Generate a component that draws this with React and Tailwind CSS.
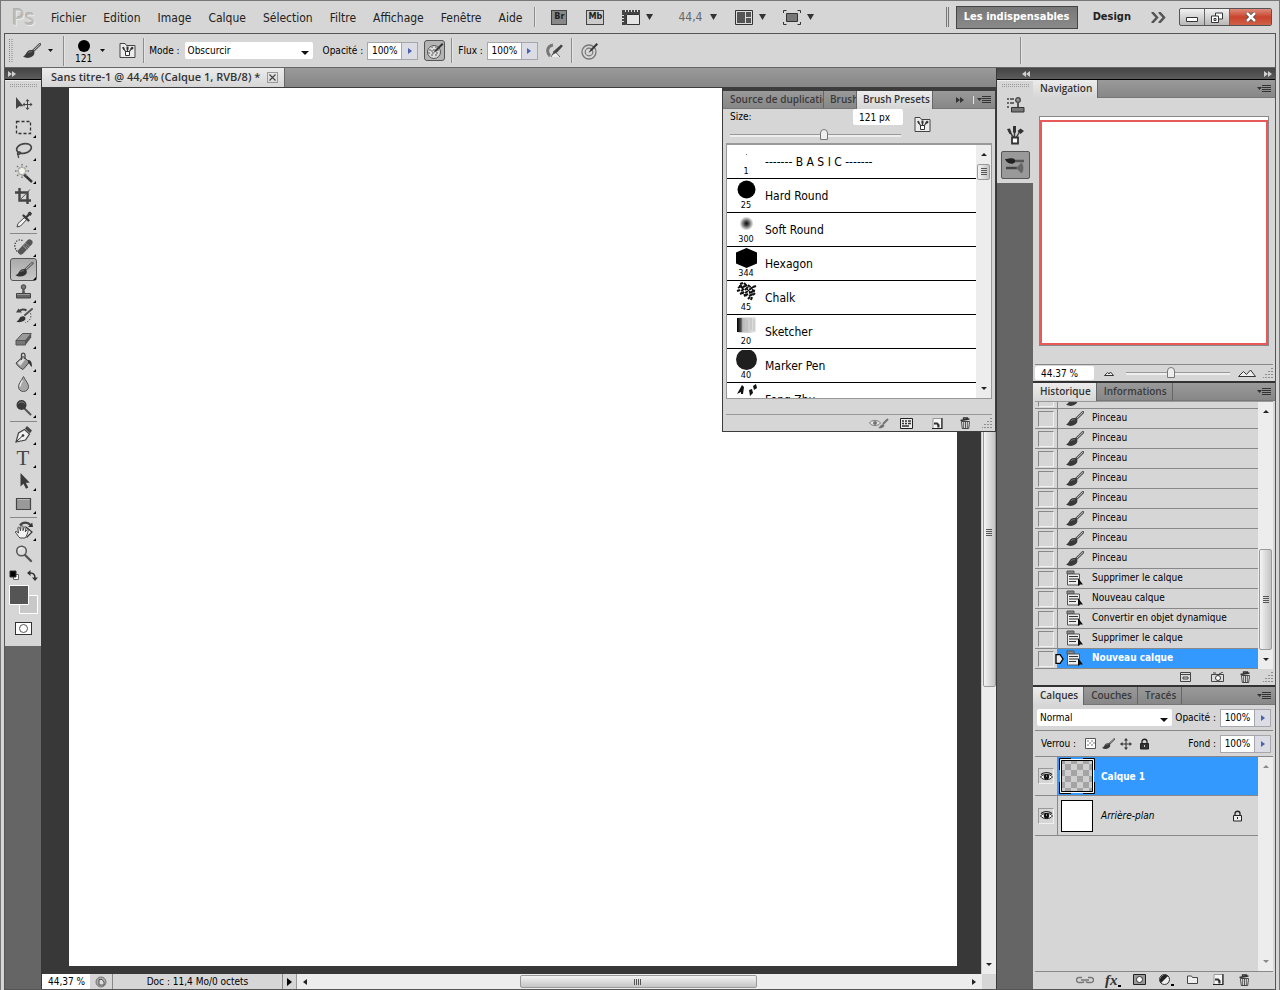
import React from "react";

const UI = "font-['DejaVu_Sans_Condensed','Noto_Sans',sans-serif]";
const TAB = "font-['Open_Sans','Noto_Sans',sans-serif]";

/* ---------- icons ---------- */

const Svg = ({ w = 20, h = 20, className = "", children }) => (
  <svg width={w} height={h} viewBox={`0 0 ${w} ${h}`} className={`block shrink-0 ${className}`} fill="none" aria-hidden="true">
    {children}
  </svg>
);

const Down = ({ className = "", w = 7, h = 4, fill = "#111" }) => (
  <Svg w={w} h={h} className={className}><path d={`M0 0h${w}L${w / 2} ${h}Z`} fill={fill} /></Svg>
);

const BrushIcon = ({ w = 18, h = 16 }) => (
  <svg width={w} height={h} viewBox="0 0 18 16" className="block shrink-0" fill="none" aria-hidden="true">
    <path d="M10 8 17 1.2" stroke="#555" strokeWidth="2.6" strokeLinecap="round" />
    <path d="M11 7 17 1.2" stroke="#bbb" strokeWidth="1" />
    <path d="M0 13.200C2.600 13 3 9.600 5.200 7.800c1.900-1.400 4.600-1 5.700.5 1.200 1.700.3 4-1.800 5.300C6.400 15.400 2.500 15.400 0 13.200Z" fill="#3a3a3a" />
    <path d="M5 10c1-1.200 2.400-1.600 3.800-1.200" stroke="#888" strokeWidth=".8" />
  </svg>
);

const PresetFolder = () => (
  <Svg w={17} h={17}>
    <path d="M1 15.500V1.500h5l1.500 2h8.500v12Z" fill="#ececec" stroke="#444" />
    <path d="M4.500 6.500 7 10M8.500 5v5M12.500 6.500 10 10" stroke="#333" strokeWidth="1.200" />
    <path d="M3 5.500l2-.8.8 2.800-1.500.3ZM7.500 4.500h2v3h-2ZM11.200 6.500l1.800-2L14.800 6l-2 2Z" fill="#333" />
    <path d="M6.500 9.500h4v4h-4Z" fill="#fff" stroke="#333" />
  </Svg>
);

const Flyout = () => (
  <button aria-label="Menu du panneau" className="px-1">
    <Svg w={14} h={8}>
      <path d="M0 2h5L2.500 5Z" fill="#333" />
      <path d="M5 .5h9M5 2.500h9M5 4.500h9M5 6.500h9" stroke="#333" />
    </Svg>
  </button>
);

const Chevrons = ({ left, fill = "#d0d0d0" }) => (
  <Svg w={8} h={6}>
    <path d={left ? "M4 0v6L0 3ZM8 0v6L4 3Z" : "M0 0v6l4-3ZM4 0v6l4-3Z"} fill={fill} />
  </Svg>
);

const Trash = () => (
  <Svg w={11} h={12}>
    <path d="M.5 3.500 9.500 2M3.500 2.500V1h4v1" stroke="#333" strokeWidth="1.300" />
    <path d="M1.500 4.500h8l-.8 7H2.300Z" fill="#eee" stroke="#444" />
    <path d="M3.700 5v6M5.500 5v6M7.300 5v6" stroke="#444" strokeWidth=".9" />
  </Svg>
);

const NewDoc = () => (
  <Svg w={11} h={11}>
    <path d="M1 .5h8.500v10H1Z" fill="#f5f5f5" stroke="#999" />
    <path d="M10 0v10.500H0" stroke="#222" strokeWidth="1.200" />
    <path d="M2 4.500h3.500l2 2V9.500H5.500L5 6.500H2Z" fill="#333" />
  </Svg>
);

const Grip = () => (
  <Svg w={10} h={10}>
    <path d="M9 0v1M9 3v1M6 3v1M9 6v1M6 6v1M3 6v1M9 9v1M6 9v1M3 9v1M0 9v1" stroke="#777" strokeWidth="1.500" />
  </Svg>
);

const Eye = () => (
  <span className="flex size-4 items-center justify-center border border-[#f0f0f0] border-t-[#999] border-l-[#999]">
    <Svg w={13} h={11}>
      <path d="M.5 6C2.500 2.800 10 2.300 12.500 6 10 9.500 3 9.500.5 6Z" fill="#fff" stroke="#222" />
      <circle cx="6.500" cy="5.700" r="2.700" fill="#111" />
      <path d="M1 3.500C4 .8 9 .8 12 3.500" stroke="#222" strokeWidth="1.200" />
      <path d="M6 5h1" stroke="#fff" />
    </Svg>
  </span>
);

const Lock = ({ dark }) => (
  <Svg w={11} h={12}>
    <path d="M3 5.500V3.500c0-3 5-3 5 0v2" stroke="#222" strokeWidth="1.300" />
    <path d="M1.500 5.500h8v5.500h-8Z" fill={dark ? "#333" : "#eee"} stroke="#222" />
    <path d="M5.500 7v2" stroke={dark ? "#ccc" : "#222"} />
  </Svg>
);

const Move4 = () => (
  <Svg w={12} h={12}>
    <path d="M6 1v10M1 6h10" stroke="#333" />
    <path d="M6 0 4 2.500h4ZM6 12 4 9.500h4ZM0 6l2.500-2v4ZM12 6 9.500 4v4Z" fill="#333" />
  </Svg>
);

const SelectedThumb = () => (
  <Svg w={36} h={36}>
    <defs>
      <pattern id="checker" width="12" height="12" patternUnits="userSpaceOnUse">
        <path d="M0 0h12v12H0Z" fill="#cfcfcf" />
        <path d="M0 0h6v6H0ZM6 6h6v6H6Z" fill="#a4a4a4" />
      </pattern>
    </defs>
    <path d="M.5 12V.5H12M24 .5h11.500V12M35.500 24v11.500H24M12 35.500H.5V24" stroke="#000" />
    <path d="M1.500 1.500h33v33h-33Z" stroke="#fff" />
    <path d="M2.500 2.500h31v31h-31Z" fill="url(#checker)" stroke="#000" />
  </Svg>
);

const toolIcons = {
  move: <><path d="M2 2v12l3.200-2.800h4.300Z" fill="#444" /><path d="M13.500 5.500v8M9.500 9.500h8" stroke="#444" /><path d="m13.500 4-2 2.200h4ZM13.500 15l-2-2.200h4ZM8.500 9.500l2.200-2v4ZM18.500 9.500l-2.200-2v4Z" fill="#444" /></>,
  marquee: <path d="M2.500 3.500h14v12h-14Z" stroke="#333" strokeWidth="1.300" strokeDasharray="3 2" />,
  lasso: <><ellipse cx="10" cy="7.500" rx="7.500" ry="4.800" transform="rotate(-12 10 7.500)" stroke="#444" strokeWidth="1.700" /><path d="M4 11c-1 2 1.500 3 2.500 1.500S4 10 3.500 12s1.500 2.500 1 5" stroke="#444" strokeWidth="1.300" /></>,
  wand: <><path d="M10 10.500 18 18" stroke="#333" strokeWidth="2.400" /><path d="M8 0v14M1 7h14M3 2l10 10M13 2 3 12" stroke="#777" strokeWidth="1.400" strokeDasharray="1.500 1" /><circle cx="8" cy="7" r="3.600" fill="#f2f2e8" stroke="#aaa" /></>,
  crop: <><path d="M1 5.500h12.500V17M5.500 1v12.500H17" stroke="#444" strokeWidth="2.400" /><path d="M5.500 13.500 16 2.500" stroke="#555" /></>,
  dropper: <><path d="m3 17 1-3.500L11 7l2.200 2L6.500 16Z" fill="#f4f4f4" stroke="#444" /><path d="m9.500 5.500 5 5M11.500 8 16 3.500" stroke="#3a3a3a" strokeWidth="2.400" strokeLinecap="round" /><path d="m13.500 3 2.500-1.500 2 2-1.500 2.500Z" fill="#3a3a3a" /></>,
  heal: <><path d="M8.500 3.500C4 1.500.5 5 .8 9s2.700 6 4.200 6.500" stroke="#333" strokeWidth="1.300" strokeDasharray="1.200 1.500" /><path d="M7 14.500 15.500 5.500" stroke="#555" strokeWidth="6" strokeLinecap="round" /><path d="m9.500 9.500 3 2.500M10.500 8l3.500 3" stroke="#bbb" strokeWidth="1" strokeDasharray="1 1" /><path d="m8.500 8 5 5M11 6l5 4" stroke="#999" strokeWidth=".8" /></>,
  brush: <><path d="m11.500 9.500 7-6.500" stroke="#555" strokeWidth="2.400" strokeLinecap="round" /><path d="m12 9 6.500-6" stroke="#ccc" strokeWidth=".9" /><path d="M1.500 15c2.800-.2 3.300-3.500 5.500-5.200 2-1.400 4.400-1 5.400.6s.3 3.700-1.700 4.900c-2.600 1.600-6.700 1.700-9.200-.3Z" fill="#333" /><path d="M6.500 12c1-1.300 2.300-1.600 3.700-1.200" stroke="#888" strokeWidth=".8" /></>,
  stamp: <><circle cx="9.500" cy="4" r="2.300" fill="#777" stroke="#444" /><path d="M8.500 6h2l.5 5H8Z" fill="#555" /><path d="M2.500 10.500h14v4.500h-14Z" fill="#666" stroke="#444" /><path d="M3 11.500h13" stroke="#999" /></>,
  history: <><path d="m11 9 7-6" stroke="#555" strokeWidth="2" strokeLinecap="round" /><path d="M2 15.500c2.500 0 3-3.500 5-4.800 1.600-1 3.500-.6 4.200.6.700 1.400 0 3-1.600 3.800-2.200 1.300-5.600 1.500-7.600.4Z" fill="#333" /><path d="M5 5.500c2-2.500 5.500-2.500 7.500-1" stroke="#444" strokeWidth="2" /><path d="M2 6.500h6L4.500 2.500Z" fill="#444" /><path d="M16.500 7c1.500 4.500-1 9-5.500 9.500" stroke="#555" strokeDasharray="1.500 1.500" /></>,
  eraser: <><path d="M2 11.500 8.500 4.500h8.700L11.500 11.500Z" fill="#999" stroke="#555" /><path d="M2 11.500h9.500V16H2Z" fill="#777" stroke="#555" /><path d="m11.500 11.500 5.700-7v4L11.500 16Z" fill="#555" /></>,
  bucket: <><path d="m2 11 7-6.500 6.500 5.500-6.500 7.500C6 16 3.500 14 2 11Z" fill="#999" stroke="#444" /><path d="m3.500 11 5.500-5 2 1.800-4.500 6Z" fill="#ddd" /><path d="M7.500 8V3c0-2.500 3.500-2.500 3.500 0v4" stroke="#444" strokeWidth="1.300" /><path d="M14 8c3 0 4 2.500 4 7-1.500-.5-2-3-4-4.500Z" fill="#333" /></>,
  drop: <><path d="M9.500 1.500c2.500 5 5 7 5 10.200 0 3-2.300 4.800-5 4.800s-5-1.800-5-4.800c0-3.200 2.500-5.200 5-10.200Z" fill="#a8a8a8" stroke="#555" /><path d="M8.500 5.500C7 8 6 9.500 6 11.500" stroke="#eee" strokeWidth="1.300" /></>,
  dodge: <><path d="m10 10 6.500 6.500" stroke="#555" strokeWidth="2" strokeLinecap="round" /><circle cx="7.500" cy="7" r="5" fill="#3a3a3a" /><path d="M4.500 5.500c1.500-2 4.500-2 6 0" stroke="#888" /></>,
  pen: <><path d="m2 17 2.500-9 6-3.500L15.500 9 11.500 15Z" fill="#f0f0f0" stroke="#444" strokeWidth="1.200" /><path d="M2.500 16.500 9 10.500" stroke="#333" /><circle cx="9" cy="10.500" r="1.300" fill="#333" /><path d="m11 3.500 2-2.500 5 4.500-2 2.800Z" fill="#444" /></>,
  arrow: <path d="M6.500 2v13.500l3-2.800 2.500 5 2.300-1.200-2.500-4.700h4Z" fill="#3a3a3a" />,
  rect: <><path d="M2.500 4.500h14v11h-14Z" fill="#999" stroke="#444" strokeWidth="1.200" /><path d="M3.500 5.500h12" stroke="#bbb" /></>,
  hand: <><path d="M6 4.500c3-4 8-3.500 10.500-.5" stroke="#444" strokeWidth="2.200" /><path d="M14 6h5l-.8-4.500Z" fill="#333" /><path d="m12 6 6 5-5.500 5.500" fill="#f2f2f2" stroke="#333" strokeWidth="1.200" /><path d="M6 17c-2-1.500-3-4.200-4.800-6 .8-1.200 2.300-.5 3.300 1.200L3.800 7c.2-1.200 1.700-1 2 0l.7 2.800L7 5.500c.3-1.200 1.900-1 2 .1v4l1.200-3.300c.5-1 1.900-.6 1.800.5l-.7 4 1.500-1.800c.8-.7 1.800 0 1.400 1C13.500 12 13 15 11 17Z" fill="#f2f2f2" stroke="#444" /></>,
  zoom: <><path d="m11 11 6 6" stroke="#555" strokeWidth="2.400" strokeLinecap="round" /><circle cx="7.500" cy="7" r="4.800" fill="#ddd" stroke="#555" strokeWidth="1.500" /><path d="M5 6c.5-1.500 2-2 3-2" stroke="#fff" /></>,
};

const toolGroups = [
  [["move", "Déplacement"], ["marquee", "Rectangle de sélection"], ["lasso", "Lasso"], ["wand", "Sélection rapide"], ["crop", "Recadrage"], ["dropper", "Pipette"]],
  [["heal", "Correcteur"], ["brush", "Pinceau"], ["stamp", "Tampon"], ["history", "Forme d'historique"], ["eraser", "Gomme"], ["bucket", "Pot de peinture"], ["drop", "Goutte d'eau"], ["dodge", "Densité"]],
  [["pen", "Plume"], ["type", "Texte"], ["arrow", "Sélection de tracé"], ["rect", "Rectangle"]],
  [["hand", "Main"], ["zoom", "Zoom"]],
];

/* ---------- small controls ---------- */

const VLine = ({ className = "h-7" }) => <span className={`block w-px shrink-0 bg-[#8c8c8c] shadow-[1px_0_#e4e4e4] ${className}`} />;

const Percent = ({ id, label }) => (
  <div className="flex items-center gap-1">
    <label htmlFor={id}>{label}</label>
    <span className="flex h-[18px] border border-[#a6a6ac] bg-[#a6a6ac]">
      <input id={id} defaultValue="100%" className="w-[33px] bg-white text-center text-[10px] outline-none" />
      <button aria-label={`Régler ${label}`} className="ml-px flex w-[15px] items-center justify-center bg-[#dcdce4]">
        <Svg w={4} h={6}><path d="M0 0v6l4-3Z" fill="#4a62b0" /></Svg>
      </button>
    </span>
  </div>
);

const Select = ({ id, label, value, className }) => (
  <span className={`relative flex ${className}`}>
    <select id={id} aria-label={label} defaultValue={value} className="h-full w-full appearance-none rounded-xs bg-white pl-[3px] text-[10px] outline-none">
      <option>{value}</option>
    </select>
    <Down className="pointer-events-none absolute top-1/2 right-1" w={8} h={4} />
  </span>
);

const Slider = ({ label, value, className = "" }) => (
  <input
    type="range"
    aria-label={label}
    defaultValue={value}
    className={`h-3 appearance-none bg-transparent [&::-webkit-slider-runnable-track]:h-[3px] [&::-webkit-slider-runnable-track]:border-t [&::-webkit-slider-runnable-track]:border-[#999] [&::-webkit-slider-runnable-track]:bg-[#eee] [&::-webkit-slider-thumb]:-mt-[6px] [&::-webkit-slider-thumb]:h-[11px] [&::-webkit-slider-thumb]:w-2 [&::-webkit-slider-thumb]:appearance-none [&::-webkit-slider-thumb]:rounded-t-full [&::-webkit-slider-thumb]:border [&::-webkit-slider-thumb]:border-[#777] [&::-webkit-slider-thumb]:bg-[#eee] ${className}`}
  />
);

const VScroll = ({ className = "", before = "", thumb, after = "flex-1", fill = "#222" }) => (
  <div className={`flex w-[15px] shrink-0 flex-col items-center bg-[#ededed] ${className}`}>
    <Svg w={6} h={3} className="my-2"><path d="M0 3h6L3 0Z" fill={fill} /></Svg>
    <span className={before} />
    {thumb && (
      <span className={`flex w-[13px] shrink-0 items-center justify-center rounded-xs border border-[#999] bg-linear-to-r from-[#f4f4f4] to-[#c4c4c4] ${thumb}`}>
        <Svg w={6} h={8}><path d="M0 .5h6M0 2.500h6M0 4.500h6M0 6.500h6" stroke="#555" /></Svg>
      </span>
    )}
    <span className={after} />
    <Down className="my-2" w={6} h={3} fill={fill} />
  </div>
);

const Tabs = ({ items, tail }) => (
  <div className={`flex h-[18px] shrink-0 items-stretch bg-linear-to-b from-[#9a9a9a] to-[#868686] text-[10px] font-semibold ${TAB}`}>
    {items.map(([name, cls], i) => (
      <button
        key={name}
        className={`overflow-hidden border-r border-[#666] pb-px text-left whitespace-nowrap ${cls || "pr-[5px] pl-[7px]"} ${
          (tail ? i === items.length - 1 : i === 0) ? "bg-linear-to-b from-[#ececec] to-[#d6d6d6] text-[#333]" : "border-b border-b-[#777] text-[#3a3a3a]"
        }`}
      >
        {name}
      </button>
    ))}
    <span className="flex flex-1 items-center justify-end border-b border-[#777]">
      {tail}
      <Flyout />
    </span>
  </div>
);

/* ---------- bars ---------- */

const menus = ["Fichier", "Edition", "Image", "Calque", "Sélection", "Filtre", "Affichage", "Fenêtre", "Aide"];

function MenuBar() {
  return (
    <header className="flex h-[32px] shrink-0 items-center pl-2">
      <span className={`w-[39px] pb-px text-[21px] leading-8 text-[#bcbcbc] [text-shadow:1px_1px_#ececec,-1px_-1px_#b0b0b0] ${TAB}`}>Ps</span>
      <nav className="flex gap-[17px] pt-[2px] text-[12px] text-[#222]">
        {menus.map((m) => <button key={m}>{m}</button>)}
      </nav>
      <VLine className="ml-3 h-5" />
      <button className="ml-4 flex h-[15px] w-4 items-center justify-center border border-[#444] bg-[#888] text-[9px] font-bold text-[#222]">Br</button>
      <button className="ml-[19px] flex h-[15px] w-[18px] items-center justify-center border border-[#444] bg-[#ccc] text-[9px] font-bold text-[#222]">Mb</button>
      <button aria-label="Afficher les extras" className="ml-[18px] flex items-center gap-[6px]">
        <Svg w={18} h={15}>
          <path d="M4.500 4.500h13v10h-13Z" fill="#e4e4e4" stroke="#333" />
          <path d="M0 0h18v4H4v11H0Z" fill="#444" />
          <path d="M3.500 0v2M6.500 0v2M9.500 0v2M12.500 0v2M15.500 0v2M0 5.500h2M0 8.500h2M0 11.500h2" stroke="#ddd" />
        </Svg>
        <Down w={7} h={6} fill="#333" />
      </button>
      <button className="ml-[25px] flex items-center gap-2 text-[12px] text-[#666]">44,4<Down w={7} h={6} fill="#333" /></button>
      <button aria-label="Réorganiser les documents" className="ml-[18px] flex items-center gap-[6px]">
        <Svg w={18} h={15}>
          <path d="M.5.5h17v14H.5Z" fill="#ddd" stroke="#333" />
          <path d="M2 2h8v11H2ZM11 2h5v5h-5ZM11 8h5v5h-5Z" fill="#555" />
        </Svg>
        <Down w={7} h={6} fill="#333" />
      </button>
      <button aria-label="Mode d'écran" className="ml-[17px] flex items-center gap-[6px]">
        <Svg w={18} h={15}>
          <path d="M.5 3V.5h3M14.500.5h3V3M17.500 12v2.500h-3M3.500 14.500h-3V12" stroke="#333" />
          <path d="M3.500 3.500h11v8h-11Z" fill="#777" stroke="#333" />
        </Svg>
        <Down w={7} h={6} fill="#333" />
      </button>
      <span className="ml-auto h-5 w-[3px] border-x border-[#777]" />
      <button className="ml-[7px] h-[23px] w-[122px] border border-[#444] bg-linear-to-b from-[#777] to-[#8a8a8a] text-[11px] font-bold text-white">Les indispensables</button>
      <button className="ml-[15px] text-[11px] font-bold text-[#222]">Design</button>
      <button aria-label="Autres espaces de travail" className="ml-5">
        <Svg w={15} h={11}><path d="m1 0 5 5.500L1 11M8 0l5 5.500L8 11" stroke="#555" strokeWidth="2.500" /></Svg>
      </button>
      <span className="mr-1 ml-[13px] flex h-[18px] overflow-hidden rounded-xs border border-[#555] bg-linear-to-b from-[#f2f2f2] to-[#b8b8b8]">
        <button aria-label="Réduire" className="flex w-[25px] items-center justify-center border-r border-[#666] pt-1">
          <Svg w={12} h={5}><path d="M.5.5h11v4H.5Z" fill="#fff" stroke="#333" /></Svg>
        </button>
        <button aria-label="Restaurer" className="flex w-[25px] items-center justify-center border-r border-[#666]">
          <Svg w={12} h={11}>
            <path d="M4.500 1h7v6h-7Z" fill="#fff" stroke="#333" />
            <path d="M.5 4h7v6.500h-7Z" fill="#fff" stroke="#333" /><path d="M3 6.500h2V8.500H3Z" stroke="#333" />
          </Svg>
        </button>
        <button aria-label="Fermer" className="flex w-[41px] items-center justify-center bg-linear-to-b from-[#dd8a7a] via-[#c8432c] to-[#d06048]">
          <Svg w={12} h={10}><path d="m2 1 8 8M10 1 2 9" stroke="#444" strokeWidth="4" /><path d="m2 1 8 8M10 1 2 9" stroke="#fff" strokeWidth="2.500" /></Svg>
        </button>
      </span>
    </header>
  );
}

function OptionsBar() {
  return (
    <div className="flex h-[34px] shrink-0 items-center border-b border-[#666] pl-1 text-[10px] text-black">
      <Svg w={4} h={24}><path d="M.5 0v24M3 0v24" stroke="#888" strokeDasharray="1 1" /></Svg>
      <button aria-label="Pinceau prédéfini" className="ml-[10px] flex items-center gap-[7px]"><BrushIcon /><Down w={5} h={3} /></button>
      <VLine className="ml-[10px] h-[30px]" />
      <button className="ml-[11px] flex items-center gap-2">
        <span className="flex flex-col items-center pt-1 leading-[13px]">
          <span className="size-3 rounded-full bg-black" />
          121
        </span>
        <Down w={5} h={3} />
      </button>
      <button aria-label="Panneau Formes" className="ml-[14px]"><PresetFolder /></button>
      <VLine className="ml-[7px] h-[25px]" />
      <label htmlFor="mode" className="ml-[5px]">Mode :</label>
      <Select id="mode" value="Obscurcir" className="mr-[10px] ml-[5px] h-[17px] w-[128px]" />
      <Percent id="opacity" label="Opacité :" />
      <button aria-label="Pression : opacité" className="ml-[6px] flex size-[21px] items-center justify-center rounded-[3px] border border-[#555] bg-[#b4b4b4]">
        <Svg w={18} h={18}>
          <circle cx="8" cy="10" r="6.500" fill="#ddd" stroke="#555" /><path d="M3 8h11M2 11h12M6 4v12M10 4v12" stroke="#999" strokeDasharray="2 2" strokeWidth="2" />
          <path d="m7.500 11 2-3.500L16 1l1.500 1.500-6.500 6Z" fill="#333" />
        </Svg>
      </button>
      <VLine className="ml-[6px] h-[25px]" />
      <span className="ml-[6px]"><Percent id="flow" label="Flux :" /></span>
      <button aria-label="Aérographe" className="ml-2">
        <Svg w={18} h={16}>
          <path d="M7 2C.5 3 .5 10 4 13" stroke="#777" strokeWidth="3" /><path d="m5 14 3.500-6L14 14M7 9l6-5" stroke="#666" fill="#eee" />
          <path d="m6 12 3-4.500L15 1.500l2 1.500-6 6.500Z" fill="#444" />
        </Svg>
      </button>
      <VLine className="ml-[7px] h-[25px]" />
      <button aria-label="Pression : taille" className="ml-[9px]">
        <Svg w={18} h={18}>
          <circle cx="8" cy="10" r="7" stroke="#777" strokeWidth="1.300" /><circle cx="8" cy="10" r="3.800" stroke="#777" strokeWidth="1.200" />
          <path d="m7.500 11 2-3.500L15.500 1l1.500 1.500-6 6Z" fill="#333" />
        </Svg>
      </button>
      <VLine className="mr-[254px] ml-auto h-[27px]" />
    </div>
  );
}

function Toolbar() {
  return (
    <aside className="w-[37px] shrink-0 border-r border-[#383838] bg-[#656565]">
      <div className="flex h-3 items-center border-b border-black bg-linear-to-b from-[#444] to-[#5c5c5c] pl-[3px]"><Chevrons /></div>
      <div className="flex flex-col items-center border-t border-[#eee] bg-[#d6d6d6] pt-[3px] pb-[11px]">
        <Svg w={27} h={4} className="mb-[5px]"><path d="M0 .5h27M0 2.500h27" stroke="#999" strokeDasharray="1 1" /></Svg>
        {toolGroups.map((group, g) => (
          <div key={g} className={g ? "mt-[2px] border-t border-[#888] pt-px" : ""}>
            {group.map(([id, label]) => (
              <button
                key={id}
                aria-label={label}
                className={`flex h-[23px] w-[27px] items-center justify-end rounded-[3px] border ${id === "brush" ? "border-[#555] bg-linear-to-b from-[#aaa] to-[#c8c8c8]" : "border-transparent"}`}
              >
                {id === "type" ? (
                  <span className="w-5 pr-px text-center font-['Liberation_Serif',serif] text-[21px] leading-5 text-[#444]">T</span>
                ) : (
                  <Svg>{toolIcons[id]}</Svg>
                )}
                {id !== "move" && id !== "zoom" ? (
                  <Svg w={3} h={3} className="-ml-px self-end"><path d="M3 0v3H0Z" fill="#000" /></Svg>
                ) : (
                  <span className="w-[2px]" />
                )}
              </button>
            ))}
          </div>
        ))}
        <div className="mt-[5px] flex gap-[7px]">
          <button aria-label="Couleurs par défaut">
            <Svg w={11} h={11}><path d="M4.500 4.500h5v5h-5Z" fill="#fff" stroke="#666" /><path d="M1 1h6v6H1Z" fill="#000" stroke="#333" /></Svg>
          </button>
          <button aria-label="Permuter les couleurs">
            <Svg w={11} h={11}><path d="M2.500 3C7 2.500 8 5 8 8.500" stroke="#333" strokeWidth="1.500" /><path d="M0 3l3.500-3v6ZM8 11 5 7.500h6Z" fill="#333" /></Svg>
          </button>
        </div>
        <button aria-label="Couleurs" className="mt-[3px]">
          <Svg w={31} h={31}>
            <path d="M11.500 11.500h18v18h-18Z" fill="#c8c8c8" stroke="#fff" />
            <path d="M1.500 1.500h19v19h-19Z" fill="#555" stroke="#fff" />
          </Svg>
        </button>
        <button aria-label="Mode masque" className="mt-[7px] flex h-[13px] w-[17px] items-center justify-center border border-[#333] bg-white">
          <span className="size-[9px] rounded-full border border-[#555]" />
        </button>
      </div>
    </aside>
  );
}

/* ---------- brush presets ---------- */

const brushes = [
  ["1", "------- B A S I C -------", <path d="M10 8h1v1h-1Z" fill="#777" />],
  ["25", "Hard Round", <circle cx="10.500" cy="9.500" r="9" fill="#000" />],
  ["300", "Soft Round", <><defs><radialGradient id="soft"><stop stopColor="#111" /><stop offset=".3" stopColor="#444" /><stop offset="1" stopColor="#fff" /></radialGradient></defs><circle cx="10.500" cy="9.500" r="7" fill="url(#soft)" /></>],
  ["344", "Hexagon", <path d="M10.500 0 21 4.500v11L10.500 20 0 15.500v-11Z" fill="#000" />],
  ["45", "Chalk", <><path d="M4 2l3-1M8 1l2 2M2 6l3-2 2 3M7 5l4-2M12 3l2 2M1 9l3-1M5 9l3-2M9 8l3-3M13 8l4-3M17 5l3-1M16 8l3 1M4 12l4-2M9 11l3-2M13 11l5-2M8 14l4-2M13 14l4-2M17 13l2-2M12 17l2-2M15 18l1-3" stroke="#111" strokeWidth="2" /><path d="M3 3l4 4M10 6l5 5M6 11l5 3M14 4l4 6" stroke="#111" /></>],
  ["20", "Sketcher", <><defs><linearGradient id="sk"><stop stopColor="#000" /><stop offset=".22" stopColor="#555" /><stop offset=".3" stopColor="#bbb" /><stop offset="1" stopColor="#e8e8e8" /></linearGradient></defs><path d="M1 2l19-1v15l-7 1-12-1Z" fill="url(#sk)" /><path d="M8 2v14M11 4v11M15 2v12M18 3v12" stroke="#bbb" /></>],
  ["40", "Marker Pen", <circle cx="10.500" cy="9.500" r="10.500" fill="#1f1f1f" />],
  ["25", "Feng Zhu", <path d="M1 10 6 1l2 2-1 7H5V8ZM13 6l3-1 1 4-3 3ZM17 2l3-2 1 4-3 2Z" fill="#111" />],
];

function BrushPanel() {
  return (
    <section className="absolute top-0 right-0 flex h-[344px] w-[274px] flex-col border border-t-3 border-[#3c3c3c] bg-[#d6d6d6] text-[10px]">
      <Tabs
        items={[["Source de duplication", "w-[101px] pl-[7px]"], ["Brush", "w-[33px] pl-[6px]"], ["Brush Presets", "w-[76px] pl-[6px]"]]}
        tail={<span className="flex items-center gap-2"><Chevrons fill="#333" /><VLine className="h-2" /></span>}
      />
      <div className="flex px-[7px]">
        <div className="grid w-[173px] grid-cols-[1fr_50px] gap-y-1">
          <label htmlFor="size">Size:</label>
          <input id="size" defaultValue="121 px" className="h-4 w-[50px] rounded-xs bg-white pl-[6px] outline-none" />
          <Slider label="Size" value="55" className="col-span-2 w-[171px]" />
        </div>
        <button aria-label="Panneau Formes" className="ml-[11px] self-start pt-[7px]"><PresetFolder /></button>
      </div>
      <div className="mx-[3px] mt-[2px] flex min-h-0 flex-1 border border-t-2 border-[#999] bg-white">
        <ul className="flex-1 overflow-hidden">
          {brushes.map(([n, name, art], i) => (
            <li key={i} className="flex h-[34px] items-center border-b border-black">
              <span className="flex w-[38px] flex-col items-center text-[9px] leading-[11px]">
                <Svg w={21} h={20}>{art}</Svg>
                {n}
              </span>
              <span className="text-[12px]">{name}</span>
            </li>
          ))}
        </ul>
        <VScroll thumb="h-4" />
      </div>
      <div className="mx-[3px] mt-[15px] flex h-[17px] shrink-0 items-center justify-end gap-[15px] border-t border-[#999]">
        <button aria-label="Aperçu" className="-mr-1 opacity-60">
          <Svg w={20} h={11}><path d="M.5 5C2.500 1.500 9 1.500 11.500 5 9 8.500 3 8.500.5 5Z" fill="#eee" stroke="#444" /><circle cx="6" cy="5" r="2" fill="#333" /><path d="m14 6 5-5" stroke="#333" strokeWidth="2" /><path d="M9 10c2-1 3-5 6-3.500 1.500 2-2 4.500-6 3.500Z" fill="#333" /></Svg>
        </button>
        <button aria-label="Gestionnaire"><Svg w={13} h={11}><path d="M.5.5h12v10H.5Z" fill="#eee" stroke="#222" /><path d="M2 3h2M5 3h2M8 3h3M2 5.500h2M5 5.500h2M8 5.500h3M2 8h7" stroke="#333" strokeWidth="1.500" /></Svg></button>
        <button aria-label="Nouvelle forme" className="ml-1"><NewDoc /></button>
        <button aria-label="Supprimer" className="ml-[2px]"><Trash /></button>
        <span className="-ml-1"><Grip /></span>
      </div>
    </section>
  );
}

/* ---------- document ---------- */

function Document() {
  return (
    <main className="flex min-w-0 flex-1 flex-col bg-[#383838]">
      <div className={`flex h-[20px] shrink-0 border-b border-[#3c3c3c] bg-linear-to-b from-[#9a9a9a] to-[#868686] text-[11px] font-semibold text-[#333] ${TAB}`}>
        <div className="flex items-center gap-[7px] border-r border-[#666] bg-linear-to-b from-[#ececec] to-[#d6d6d6] pr-[6px] pl-[9px]">
          Sans titre-1 @ 44,4% (Calque 1, RVB/8) *
          <button aria-label="Fermer le document" className="flex size-[11px] items-center justify-center border border-[#999]">
            <Svg w={7} h={7}><path d="m.5.5 6 6M6.500.5l-6 6" stroke="#444" strokeWidth="1.200" /></Svg>
          </button>
        </div>
      </div>
      <div className="relative flex min-h-0 flex-1">
        <div className="flex-1 pr-6 pb-2 pl-[27px]"><div className="h-full bg-white" /></div>
        <VScroll className="border-l border-[#ccc]" before="flex-[272]" thumb="h-[308px]" after="flex-[269]" />
        <BrushPanel />
      </div>
      <div className="flex h-[15px] shrink-0 items-stretch bg-[#d6d6d6] text-[10px] leading-[15px] text-black">
        <input aria-label="Facteur de zoom" defaultValue="44,37 %" className="w-[48px] bg-white pl-[6px] outline-none" />
        <button aria-label="Version Cue" className="mx-[5px] self-center"><Svg w={12} h={12}><circle cx="6" cy="6" r="5" fill="#aaa" stroke="#777" /><path d="M4 3.500h3L9 6v3H4Z" fill="#ddd" stroke="#555" /></Svg></button>
        <span className="w-[171px] border-x border-[#888] text-center">Doc : 11,4 Mo/0 octets</span>
        <button aria-label="Options d'état" className="w-[14px] border-r border-[#999] pl-1"><Svg w={5} h={8}><path d="M0 0v8l5-4Z" fill="#000" /></Svg></button>
        <div className="flex flex-1 items-center bg-[#ededed] pr-[6px] pl-[6px]">
          <Svg w={4} h={6}><path d="M4 0v6L0 3Z" fill="#222" /></Svg>
          <span className="flex-[212]" />
          <span className="flex h-[13px] w-[237px] items-center justify-center rounded-xs border border-[#999] bg-linear-to-b from-[#f4f4f4] to-[#c4c4c4]">
            <Svg w={8} h={6}><path d="M.5 0v6M2.500 0v6M4.500 0v6M6.500 0v6" stroke="#555" /></Svg>
          </span>
          <span className="flex-[215]" />
          <Svg w={4} h={6}><path d="M0 0v6l4-3Z" fill="#222" /></Svg>
        </div>
        <span className="w-[14px] bg-[#d6d6d6]" />
      </div>
    </main>
  );
}

/* ---------- right dock ---------- */

function IconDock() {
  return (
    <div className="w-[36px] shrink-0">
      <div className="flex flex-col items-center gap-[2px] border-t border-[#eee] bg-[#d6d6d6] pt-[3px] pb-1">
        <Svg w={27} h={4}><path d="M0 .5h27M0 2.500h27" stroke="#999" strokeDasharray="1 1" /></Svg>
        <button aria-label="Source de duplication" className="flex size-[29px] items-center justify-center">
          <Svg w={19} h={18}>
            <path d="M1 3h2M4 3h4M1 7h2M4 7h4M1 11h2" stroke="#444" strokeWidth="1.500" />
            <circle cx="12" cy="4" r="2.300" fill="#999" stroke="#444" strokeWidth="1.300" /><path d="M12 6v5" stroke="#555" strokeWidth="2" /><path d="M5.500 11.500h12.500v4.500H5.500Z" fill="#777" stroke="#333" />
          </Svg>
        </button>
        <button aria-label="Formes" className="flex h-[28px] w-[29px] items-center justify-center">
          <Svg w={18} h={19}>
            <path d="m3 5 5 7M8.500 1v11M14 5l-4 7" stroke="#444" strokeWidth="1.500" /><path d="M1 3l3-.5 1.800 5-2.300.5ZM7 0h3v6L8.500 8 7 6ZM11.500 5l3-2.500 3.500 2.500-3.500 3Z" fill="#333" />
            <path d="M6 11.500h6v6H6Z" fill="#fff" stroke="#333" strokeWidth="1.800" />
          </Svg>
        </button>
        <button aria-label="Brush Presets" className="flex h-[28px] w-[29px] items-center justify-center rounded-[2px] border border-[#555] bg-[#999]">
          <Svg w={20} h={16}>
            <path d="M8 4h11" stroke="#555" strokeWidth="2.500" /><path d="M0 2c3 0 4-1.500 8-.5C11 2 11 6 7.500 6.800 4 7 1 5 0 2Z" fill="#222" />
            <path d="M1 11h11" stroke="#444" strokeWidth="2.500" /><path d="M11 11l5.500-5.500c2.500 3 2.500 8 0 11Z" fill="#666" />
          </Svg>
        </button>
      </div>
    </div>
  );
}

function Navigation() {
  return (
    <section className="flex flex-col bg-[#d6d6d6]">
      <Tabs items={[["Navigation"]]} />
      <div className="mx-[6px] mt-[18px] h-[230px] border border-[#888] bg-white pt-[3px]">
        <div className="h-full border-[2px] border-[#e85a5a]" />
      </div>
      <div className="mx-[2px] mt-[18px] flex h-[17px] items-center border-t border-[#888] text-[10px]">
        <input aria-label="Zoom" defaultValue="44.37 %" className="h-[14px] w-[59px] rounded-xs bg-white pl-[6px] outline-none" />
        <Svg w={10} h={5} className="ml-[10px]"><path d="m.5 4.500 3-3 1.500 1.500L6.500 1l3 3.500Z" stroke="#333" fill="#eee" /></Svg>
        <Slider label="Zoom de navigation" value="43" className="ml-3 w-[104px]" />
        <Svg w={18} h={8} className="ml-2"><path d="m.5 7.500 5-5 3 3 4-4.500 5 6.500Z" stroke="#333" fill="#eee" /></Svg>
        <span className="ml-auto"><Grip /></span>
      </div>
    </section>
  );
}

/* The oldest step is scrolled almost out of view; only the foot of its icon shows. */
const steps = [
  ["", "brush"],
  ...Array(8).fill(["Pinceau", "brush"]),
  ["Supprimer le calque"], ["Nouveau calque"], ["Convertir en objet dynamique"], ["Supprimer le calque"], ["Nouveau calque"],
];

const StepIcon = () => (
  <Svg w={17} h={17}>
    <path d="M1 1h7v3H1Z" fill="#888" stroke="#555" /><path d="M1.500 4h12v11h-12Z" fill="#eee" stroke="#555" />
    <path d="M3 6.500h9M3 9h9M3 11.500h7" stroke="#333" strokeWidth="1.200" /><path d="M12 8v8l2-1.500h3Z" fill="#111" />
  </Svg>
);

function History() {
  return (
    <section className="flex flex-col bg-[#d6d6d6]">
      <Tabs items={[["Historique"], ["Informations"]]} />
      <div className="mx-[2px] flex h-[268px]">
        <ol className="flex flex-1 flex-col justify-end overflow-hidden border-t border-[#999]">
          {steps.map(([name, kind], i) => {
            const on = i === steps.length - 1;
            return (
              <li key={i} className="flex h-5 shrink-0 items-center border-b border-[#888] text-[10px] text-black">
                <span className="flex h-full w-[23px] items-center justify-center border-r border-[#888]">
                  <span className="size-4 border border-[#f0f0f0] border-t-[#888] border-l-[#888]" />
                </span>
                <span className={`relative flex h-full flex-1 items-center ${on ? "bg-[#3399ff] font-bold text-white" : ""}`}>
                  {on && <Svg w={9} h={10} className="absolute -left-[3px]"><path d="M1 .5h4l3 4.500-3 4.500H1Z" fill="#eee" stroke="#000" strokeWidth="1.300" /></Svg>}
                  <span className="w-[34px] pl-2">{kind === "brush" ? <BrushIcon /> : <StepIcon />}</span>
                  <span className="pb-[2px]">{name}</span>
                </span>
              </li>
            );
          })}
        </ol>
        <VScroll className="border-t border-[#999]" before="flex-1" thumb="h-[101px]" after="" />
      </div>
      <div className="mx-[2px] flex h-4 items-center justify-end gap-5">
        <button aria-label="Nouveau document"><Svg w={11} h={10}><path d="M.5.5h10v9H.5Z" fill="#ddd" stroke="#444" /><path d="M.5 2.500h10M3 5h5v2H3Z" stroke="#444" /></Svg></button>
        <button aria-label="Nouvel instantané"><Svg w={13} h={10}><path d="M.5 2.500h12v7H.5ZM2 1h3" fill="#ddd" stroke="#444" /><circle cx="7" cy="6" r="2.500" fill="#fff" stroke="#333" /><path d="M8 2 12 0" stroke="#444" /></Svg></button>
        <button aria-label="Supprimer l'état" className="-ml-1"><Trash /></button>
        <span className="-ml-2"><Grip /></span>
      </div>
    </section>
  );
}

function Layers() {
  return (
    <section className="flex min-h-0 flex-1 flex-col bg-[#d6d6d6] text-[10px] text-black">
      <Tabs items={[["Calques"], ["Couches"], ["Tracés"]]} />
      <div className="mx-[2px] flex h-[26px] shrink-0 items-center justify-between border-b border-[#888] px-[2px]">
        <Select id="blend" label="Mode de fusion" value="Normal" className="h-[17px] w-[135px]" />
        <Percent id="layer-opacity" label="Opacité :" />
      </div>
      <div className="mx-[2px] flex h-[26px] shrink-0 items-center border-b border-[#888] pr-[2px] pl-[6px]">
        <span>Verrou :</span>
        <button aria-label="Verrouiller les pixels transparents" className="ml-[9px]"><Svg w={11} h={11}><path d="M.5.5h10v10H.5Z" fill="#fff" stroke="#555" /><path d="M2 2h2v2H2ZM6 2h2v2H6ZM4 4h2v2H4ZM8 4h2v2H8ZM2 6h2v2H2ZM6 6h2v2H6Z" fill="#bbb" /></Svg></button>
        <button aria-label="Verrouiller les pixels de l'image" className="ml-[6px]"><BrushIcon w={13} h={12} /></button>
        <button aria-label="Verrouiller la position" className="ml-[5px]"><Move4 /></button>
        <button aria-label="Tout verrouiller" className="ml-[7px]"><Lock dark /></button>
        <span className="ml-auto"><Percent id="fill" label="Fond :" /></span>
      </div>
      <div className="mx-[2px] flex min-h-0 flex-1">
        <ul className="flex-1">
          <li className="flex h-[39px] border-b border-[#888]">
            <button aria-label="Masquer Calque 1" className="flex w-[23px] items-center justify-center border-r border-[#888]"><Eye /></button>
            <span className="flex flex-1 items-center gap-[6px] bg-[#3399ff] pl-px font-bold text-white">
              <SelectedThumb />
              Calque 1
            </span>
          </li>
          <li className="flex h-10 border-b border-[#888]">
            <button aria-label="Masquer Arrière-plan" className="flex w-[23px] items-center justify-center border-r border-[#888]"><Eye /></button>
            <span className="flex flex-1 items-center gap-2 pr-[15px] pl-[3px] italic">
              <span className="size-8 border border-black bg-white" />
              Arrière-plan
              <span className="ml-auto"><Lock /></span>
            </span>
          </li>
        </ul>
        <VScroll fill="#888" />
      </div>
      <div className="mx-[2px] flex h-[18px] shrink-0 items-center justify-end gap-[15px] border-t border-[#888] pr-[23px] pb-[2px]">
        <button aria-label="Lier les calques"><Svg w={18} h={8}><path d="M6 1.500H3a2.500 2.500 0 0 0 0 5h3a2.500 2.500 0 0 0 2-1M12 1.500h3a2.500 2.500 0 0 1 0 5h-3a2.500 2.500 0 0 1-2-1M5 4h8" stroke="#777" strokeWidth="1.400" /></Svg></button>
        <button aria-label="Style de calque" className="-ml-1 flex w-[17px] items-end font-['Liberation_Serif',serif] text-[15px] leading-[14px] font-bold italic text-[#333]">fx<Svg w={3} h={2}><path d="M0 0h3v2H0Z" fill="#000" /></Svg></button>
        <button aria-label="Ajouter un masque" className="-ml-1"><Svg w={13} h={11}><path d="M.5.5h12v10H.5Z" fill="#999" stroke="#222" /><circle cx="6.500" cy="5.500" r="3" fill="#fff" stroke="#333" /></Svg></button>
        <button aria-label="Calque de réglage" className="-ml-[2px]"><Svg w={15} h={12}><circle cx="5.500" cy="5.500" r="5" fill="#eee" stroke="#333" /><path d="M2 9A5 5 0 0 1 9 2Z" fill="#222" /><path d="M12 10h3v2h-3Z" fill="#000" /></Svg></button>
        <button aria-label="Nouveau groupe" className="-ml-[2px]"><Svg w={11} h={9}><path d="M.5 1h4l1 1.500h5v6H.5Z" fill="#eee" stroke="#444" /></Svg></button>
        <button aria-label="Nouveau calque"><NewDoc /></button>
        <button aria-label="Supprimer le calque"><Trash /></button>
      </div>
    </section>
  );
}

export default function App() {
  return (
    <div className={`flex h-screen flex-col border border-b-0 border-[#777] bg-[#d6d6d6] px-[3px] ${UI}`}>
      <MenuBar />
      <div className="flex min-h-0 flex-1 flex-col border border-[#555]">
        <OptionsBar />
        <div className="flex min-h-0 flex-1">
          <Toolbar />
          <Document />
          <aside className="flex w-[279px] shrink-0 flex-col border-l border-[#383838] bg-[#656565]">
            <div className="flex h-3 shrink-0 items-center justify-between border-b border-black bg-linear-to-b from-[#444] to-[#5c5c5c] pr-[3px] pl-[25px]">
              <Chevrons left /><Chevrons />
            </div>
            <div className="flex min-h-0 flex-1">
              <IconDock />
              <div className="flex min-w-0 flex-1 flex-col gap-[2px] bg-[#333]">
                <Navigation />
                <History />
                <Layers />
              </div>
            </div>
          </aside>
        </div>
      </div>
    </div>
  );
}
